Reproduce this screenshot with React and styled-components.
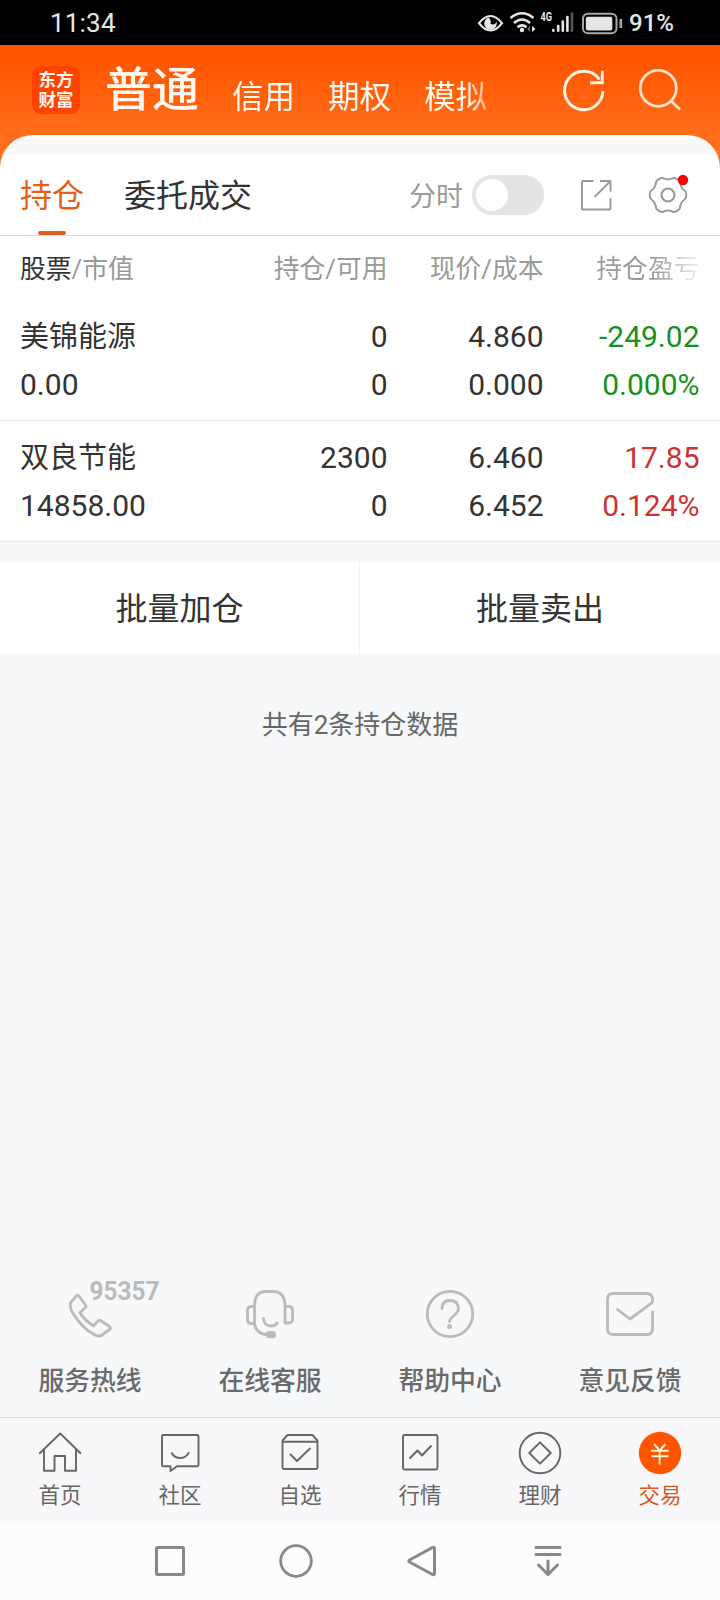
import React, { Fragment } from 'react'
import styled, { createGlobalStyle } from 'styled-components';

const GlobalStyle = createGlobalStyle`
* {
box-sizing: border-box;
}
body {
margin: 0;
background-color: #f7f8fa;
font-family: Roboto, "Noto Sans CJK SC", sans-serif;
color: #333333;
}
svg {
display: block;
flex: none;
overflow: visible;
fill: none;
}
`
const Screen = styled.div`
width: 720px;
height: 1600px;
display: flex;
flex-direction: column;
overflow: hidden;
background-color: #f7f8fa;
`

/* status bar */
const StatusBar = styled.div`
height: 45px;
flex: none;
display: flex;
align-items: center;
padding: 0 46px 0 50px;
background-color: #000;
color: #e6e6e6;
`
const Clock = styled.span`
flex: 1;
font-size: 26px;
line-height: 45px;
padding-top: 1px;
letter-spacing: 0.2px;
`
const Battery = styled.span`
margin-left: 6px;
font-size: 24px;
font-weight: 500;
line-height: 46px;
`
const NetText = styled.text`
font-family: Roboto, sans-serif;
font-size: 12px;
font-weight: 700;
fill: #e6e6e6;
`

/* orange header */
const Header = styled.header`
height: 140px;
flex: none;
margin-bottom: -50px;
display: flex;
align-items: flex-start;
padding-left: 32px;
background: linear-gradient(#ff5500 0, #ff5500 12px, #ff6e1a 90px, #ff7020 100%);
`
const Logo = styled.div`
width: 48px;
height: 48px;
margin-top: 21px;
padding-top: 4px;
border-radius: 9px;
background-color: #ff4400;
color: #fff5e8;
font-size: 17.5px;
font-weight: 700;
line-height: 20px;
text-align: center;
`
const Accounts = styled.nav`
width: 400px;
height: 90px;
margin-left: 25px;
display: flex;
overflow: hidden;
color: #fff8ee;
white-space: nowrap;
-webkit-mask-image: linear-gradient(90deg, #000 358px, rgba(0, 0, 0, 0.4) 388px, transparent 400px);
mask-image: linear-gradient(90deg, #000 358px, rgba(0, 0, 0, 0.4) 388px, transparent 400px);
`
const Account = styled.span`
margin-right: 33px;
font-size: ${props => props.$active ? '47px' : '31.5px'};
font-weight: ${props => props.$active ? 500 : 400};
line-height: ${props => props.$active ? '90px' : '105px'};
`
const HeaderIcons = styled.div`
display: flex;
gap: 31px;
margin: 23px 0 0 57px;
`

/* white sheet under the header */
const Sheet = styled.section`
flex: none;
border-radius: 33px 33px 0 0;
overflow: hidden;
background-color: #fff;
`
const SheetGap = styled.div`
height: 16px;
margin-top: 4px;
background-color: #f7f8fa;
`
const Tabs = styled.div`
height: 81px;
display: flex;
align-items: center;
padding: 0 34px 0 20px;
border-bottom: 1px solid #dddddd;
`
const Tab = styled.div`
height: 80px;
margin-right: 40px;
display: flex;
flex-direction: column;
align-items: center;
font-size: 32px;
line-height: 82px;
color: ${props => props.$active ? '#e2601a' : '#333333'};
&::after {
content: '';
width: 28px;
height: 4px;
margin-top: -6px;
border-radius: 2px;
background-color: ${props => props.$active ? '#d9621f' : 'transparent'};
}
`
const ToggleLabel = styled.span`
margin-left: auto;
padding-top: 3px;
font-size: 27px;
line-height: 78px;
color: #999999;
`
const Toggle = styled.div`
width: 72px;
height: 40px;
margin: 0 36px 0 9px;
padding: 4px;
border-radius: 20px;
background-color: #e4e4e7;
&::before {
content: '';
display: block;
width: 32px;
height: 32px;
border-radius: 50%;
background-color: #fff;
}
`

/* positions table */
const Row = styled.div`
display: grid;
grid-template-columns: 180px 187.5px 156px 156px;
padding: ${props => props.$head ? '14px 20px 12px' : '13px 20px 11px'};
border-bottom: ${props => props.$head ? 'none' : '1px solid #e8e9eb'};
text-align: right;
`
const HeadCell = styled.div`
font-size: 25.8px;
line-height: 38px;
color: #999999;
&:first-child {
text-align: left;
}
&:last-child {
color: transparent;
background: linear-gradient(90deg, #999999 108px, #e8e8e8 150px);
background-clip: text;
-webkit-background-clip: text;
}
`
const Strong = styled.span`
color: #333333;
`
const Cell = styled.div`
font-size: 30px;
line-height: 48px;
color: ${props => props.$color || '#333333'};
&:first-child {
text-align: left;
}
`
const StockName = styled.div`
font-size: 29px;
line-height: 48px;
`
const Actions = styled.div`
flex: none;
display: flex;
height: 92px;
margin-top: 20px;
background-color: #fff;
`
const Action = styled.div`
flex: 1;
font-size: 32px;
line-height: 94px;
text-align: center;
& + & {
flex: 0 0 361px;
border-left: 1px solid #f3f3f5;
}
`
const Summary = styled.div`
flex: 1;
padding-top: 51px;
font-size: 26px;
line-height: 40px;
text-align: center;
color: #666666;
`

/* help links */
const Services = styled.div`
flex: none;
display: grid;
grid-template-columns: repeat(4, 180px);
height: 129px;
`
const Service = styled.div`
display: flex;
flex-direction: column;
align-items: center;
font-size: 25.8px;
font-weight: 500;
line-height: 40px;
color: #6a6a6a;
svg {
margin-bottom: 23px;
stroke: #bbbbbb;
stroke-width: 2.8;
stroke-linecap: round;
stroke-linejoin: round;
}
`
const HotlineText = styled.text`
font-family: Roboto, sans-serif;
font-size: 25px;
font-weight: 700;
fill: #bbbbbb;
stroke: none;
`

/* bottom navigation */
const NavBar = styled.nav`
flex: none;
display: grid;
grid-template-columns: repeat(6, 120px);
height: 105px;
border-top: 1px solid #dddddf;
background-color: #f8f8fa;
`
const NavItem = styled.div`
display: flex;
flex-direction: column;
align-items: center;
padding-top: 13px;
font-size: 21.5px;
line-height: 30px;
color: ${props => props.$active ? '#d9591a' : '#666666'};
svg {
margin-bottom: 6px;
stroke: #666666;
stroke-width: 1.9;
stroke-linejoin: round;
}
`
const SystemBar = styled.div`
flex: none;
height: 78px;
display: flex;
justify-content: center;
align-items: center;
gap: 82px;
padding-right: 3px;
background-color: #fcfcfc;
svg {
stroke: #888888;
stroke-width: 3;
stroke-linejoin: round;
stroke-linecap: round;
}
`

// six teeth, every corner rounded off through the middle of its neighbours
const gearPath = () => {
  const tooth = [[-11, 18.6], [11, 18.6], [20, 15.8], [40, 15.8]]
  const points = []
  for (let i = 0; i < 6; i++) {
    tooth.forEach(([deg, r]) => {
      const a = (deg + i * 60) * Math.PI / 180
      points.push([18 + r * Math.cos(a), 18 + r * Math.sin(a)])
    })
  }
  const mid = (p, q) => `${((p[0] + q[0]) / 2).toFixed(2)} ${((p[1] + q[1]) / 2).toFixed(2)}`
  const last = points[points.length - 1]
  const curves = points.map((p, i) => `Q${p[0].toFixed(2)} ${p[1].toFixed(2)} ${mid(p, points[(i + 1) % points.length])}`)
  return `M${mid(last, points[0])}${curves.join('')}Z`
}

const StatusIcons = () => (
  <svg width="146" height="24" viewBox="477 11 146 24">
    <path d="M479 23.2Q484.500 16 490.500 16T502 23.200Q496.500 30.500 490.500 30.500T479 23.200Z" stroke="#e6e6e6" strokeWidth="2.200" />
    <path d="M488.500 17.500A6.300 6.300 0 1 0 496.500 21.500A3.600 3.600 0 0 1 490.500 23.500Q491.500 20 488.500 17.500Z" fill="#e6e6e6" />
    <g stroke="#e6e6e6" strokeWidth="2.600">
      <path d="M510.500 18Q522 8.500 533.500 18" />
      <path d="M514 23Q522 16 530 23" />
      <path d="M517.500 27.300Q522 23.500 526.500 27.300" />
    </g>
    <circle cx="522" cy="30" r="2.200" fill="#e6e6e6" />
    <path d="M530 26v6l-3-3Z" fill="#666" />
    <path d="M532 26v6l3.500-3Z" fill="#e6e6e6" />
    <NetText x="540.500" y="21" textLength="11.500" lengthAdjust="spacingAndGlyphs">4G</NetText>
    <g strokeWidth="2.600" stroke="#e6e6e6" strokeLinecap="round">
      <path d="M553.300 30v.8M558.200 26v4.800M562.800 21.500v9.300M567.400 17v13.800" />
      <path d="M572 13.500v17.300" stroke="#555" />
    </g>
    <rect x="583" y="13.800" width="33.500" height="19.500" rx="5" stroke="#a8a8a8" strokeWidth="2" />
    <rect x="585.800" y="16.800" width="26.500" height="13.600" rx="2" fill="#e6e6e6" />
    <path d="M620.800 19v9" stroke="#a8a8a8" strokeWidth="2.600" />
  </svg>
)

const rows = [
  { name: '美锦能源', value: '0.00', hold: '0', usable: '0', price: '4.860', cost: '0.000', profit: '-249.02', rate: '0.000%', color: '#1a9020' },
  { name: '双良节能', value: '14858.00', hold: '2300', usable: '0', price: '6.460', cost: '6.452', profit: '17.85', rate: '0.124%', color: '#cc3333' },
]

const services = [
  {
    label: '服务热线',
    icon: (
      <Fragment>
        <path d="M11.500 7.800L6.500 13.500Q3.500 17 7.500 24.500Q17 40.500 30 47Q34 49 37 47L44.500 41.500Q46.500 40 44.500 38.500L35.500 32.500Q34.300 31.700 33.300 32.800L28.500 37.800Q19 32 15 24.500L20.500 19.500Q21.500 18.700 20.800 17.500L14 8Q12.800 6.500 11.500 7.800Z" />
        <HotlineText x="24.500" y="12" textLength="70" lengthAdjust="spacingAndGlyphs">95357</HotlineText>
      </Fragment>
    ),
  },
  {
    label: '在线客服',
    icon: (
      <Fragment>
        <path d="M9.500 35V18.500Q9.500 3.500 21 3.500H28Q40 3.500 40 18.500V35H42Q47.500 35 47.500 32V22Q47.500 18.500 44 18.500H40M9.500 18.500H6Q2.500 18.500 2.500 22V32Q2.500 35.500 6 35.500H9.500Q10.500 46 22 46.500" />
        <path d="M18.500 30.500Q19 38 26 38Q30.500 38 32 35" />
        <rect x="22.500" y="44.300" width="7" height="4.500" rx="1.800" fill="#bbbbbb" />
      </Fragment>
    ),
  },
  {
    label: '帮助中心',
    icon: (
      <Fragment>
        <circle cx="25" cy="26" r="22.700" />
        <path d="M17 20.500Q17 12.500 25 12.500T33.500 20.500Q33.500 24 29 27.500Q24.500 31 24.500 33.500" />
        <circle cx="24.600" cy="38.500" r="2.500" fill="#bbbbbb" stroke="none" />
      </Fragment>
    ),
  },
  {
    label: '意见反馈',
    icon: <path d="M47.500 24V41Q47.500 46.500 42 46.500H8Q2.500 46.500 2.500 41V11.500Q2.500 5.500 8 5.500H41Q47.500 5.500 47.500 11V13.500Q47.500 14.500 46.500 15.200L25 31L12.500 21.500" />,
  },
]

const navItems = [
  {
    label: '首页',
    icon: <path d="M1.200 22.700L22.200 2.500L43 22.700M6 18.500V39.800H16.500V25H27V39.800H38V18.500" />,
  },
  {
    label: '社区',
    icon: (
      <Fragment>
        <path d="M5 4H39Q40.500 4 40.500 5.500V33.500Q40.500 35.300 39 35.300H19L12.500 40V35.300H5Q4 35.300 4 34V5.500Q4 4 5 4Z" />
        <path d="M13.500 21.500Q16 27 22.500 27Q28.500 27 31 21" />
      </Fragment>
    ),
  },
  {
    label: '自选',
    icon: (
      <Fragment>
        <path d="M9.500 4H34.500L39.500 9.500V36.500Q39.500 38 38 38H6Q4.500 38 4.500 36.500V9.500ZM4.500 10.800H39.500" />
        <path d="M12 23L19 30L32.500 17" />
      </Fragment>
    ),
  },
  {
    label: '行情',
    icon: (
      <Fragment>
        <rect x="5" y="4" width="34.500" height="34.500" rx="1.500" />
        <path d="M11.500 27.500L19.500 19.500L24 24.500L33.500 14.500" />
      </Fragment>
    ),
  },
  {
    label: '理财',
    icon: (
      <Fragment>
        <circle cx="22" cy="22" r="20.300" />
        <path d="M22 11.300L32.700 22L22 32.700L11.300 22Z" />
      </Fragment>
    ),
  },
  {
    label: '交易',
    active: true,
    icon: (
      <Fragment>
        <circle cx="22" cy="22" r="21.200" fill="#ff5500" stroke="none" />
        <path d="M16 13L21.700 19.500L27.500 13M13 19.800H30.500M13 25.300H30.500M21.700 19.500V33.500" stroke="#fff0d8" />
      </Fragment>
    ),
  },
]

export default function App() {
  return (
    <Fragment>
      <GlobalStyle />
      <Screen>
        <StatusBar>
          <Clock>11:34</Clock>
          <StatusIcons />
          <Battery>91%</Battery>
        </StatusBar>

        <Header>
          <Logo>东方<br />财富</Logo>
          <Accounts>
            <Account $active>普通</Account>
            <Account>信用</Account>
            <Account>期权</Account>
            <Account>模拟</Account>
          </Accounts>
          <HeaderIcons>
            <svg width="44" height="44" viewBox="562 68 44 44" stroke="#fff3e4" strokeWidth="2.900">
              <path d="M602.900 91A19.200 19.200 0 1 1 599.500 79.600" />
              <path d="M602.300 71V82.800H590" />
            </svg>
            <svg width="44" height="44" viewBox="637 68 44 44" stroke="#ffe0c8" strokeWidth="2.800">
              <circle cx="658.300" cy="88.300" r="18" />
              <path d="M671 101L680 109.600" />
            </svg>
          </HeaderIcons>
        </Header>

        <Sheet>
          <SheetGap />
          <Tabs>
            <Tab $active>持仓</Tab>
            <Tab>委托成交</Tab>
            <ToggleLabel>分时</ToggleLabel>
            <Toggle />
            <svg width="32" height="32" viewBox="580 179 32 32" stroke="#999999" strokeWidth="1.900">
              <path d="M593.500 181H583Q582 181 582 182V208.500Q582 209.500 583 209.500H609.500Q610.500 209.500 610.500 208.500V198" />
              <path d="M600 181H610.500V191.500M610 181.500L594.500 197" />
            </svg>
            <svg width="36" height="36" viewBox="0 0 36 36" stroke="#999999" strokeWidth="1.900" style={{ marginLeft: 38 }}>
              <path d={gearPath()} strokeLinejoin="round" />
              <circle cx="18" cy="18" r="6.500" strokeWidth="2.200" />
              <circle cx="33" cy="3" r="5.200" fill="#ff0000" stroke="none" />
            </svg>
          </Tabs>

          <Row $head>
            <HeadCell><Strong>股票</Strong>/市值</HeadCell>
            <HeadCell>持仓/可用</HeadCell>
            <HeadCell>现价/成本</HeadCell>
            <HeadCell>持仓盈亏</HeadCell>
          </Row>
          {rows.map(row => (
            <Row key={row.name}>
              <Cell><StockName>{row.name}</StockName>{row.value}</Cell>
              <Cell>{row.hold}<br />{row.usable}</Cell>
              <Cell>{row.price}<br />{row.cost}</Cell>
              <Cell $color={row.color}>{row.profit}<br />{row.rate}</Cell>
            </Row>
          ))}
        </Sheet>

        <Actions>
          <Action>批量加仓</Action>
          <Action>批量卖出</Action>
        </Actions>
        <Summary>共有2条持仓数据</Summary>

        <Services>
          {services.map(item => (
            <Service key={item.label}>
              <svg width="50" height="50" viewBox="0 0 50 50">{item.icon}</svg>
              {item.label}
            </Service>
          ))}
        </Services>

        <NavBar>
          {navItems.map(item => (
            <NavItem key={item.label} $active={item.active}>
              <svg width="44" height="44" viewBox="0 0 44 44">{item.icon}</svg>
              {item.label}
            </NavItem>
          ))}
        </NavBar>

        <SystemBar>
          <svg width="44" height="44" viewBox="0 0 44 44"><rect x="8.500" y="8.500" width="27" height="27" rx="1" /></svg>
          <svg width="44" height="44" viewBox="0 0 44 44"><circle cx="22" cy="22" r="15.300" strokeWidth="2.800" /></svg>
          <svg width="44" height="44" viewBox="0 0 44 44"><path d="M32.500 8.500Q34.500 7.500 34.500 9.500V34.500Q34.500 36.500 32.500 35.500L9.500 23Q8 22 9.500 21Z" /></svg>
          <svg width="44" height="44" viewBox="0 0 44 44"><path d="M10 8.500H34M10 15.500H34M22 22V35M12.500 26L22 35.500L31.500 26" /></svg>
        </SystemBar>
      </Screen>
    </Fragment>
  )
}
